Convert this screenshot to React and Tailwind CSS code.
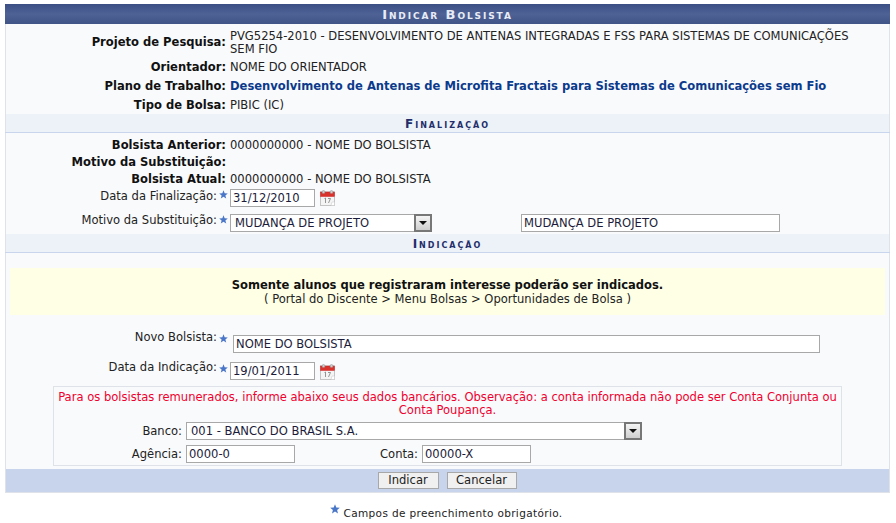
import React from "react";

const Star = ({ className = "" }) => (
  <svg width="9" height="9" viewBox="0 0 10 10" className={className}>
    <path d="M5 0.3 L6.3 3.6 L9.8 3.8 L7.1 6 L8 9.5 L5 7.6 L2 9.5 L2.9 6 L0.2 3.8 L3.7 3.6 Z" fill="#4a76c8" />
  </svg>
);

const Calendar = () => (
  <svg width="15" height="16" viewBox="0 0 15 16" className="block">
    <rect x="0.5" y="2" width="14" height="13.5" fill="#f4f4f4" stroke="#c4c4c4" />
    <rect x="0.5" y="2" width="14" height="4.5" fill="#d9312b" stroke="#c22" strokeWidth="0.5" />
    <circle cx="3.5" cy="2" r="1.5" fill="#cccccc" stroke="#888" strokeWidth="0.5" />
    <circle cx="11.5" cy="2" r="1.5" fill="#cccccc" stroke="#888" strokeWidth="0.5" />
    <path d="M4.5 8.5 L5.5 8 V13 M8 8.5 H10.5 L8.5 13" fill="none" stroke="#8a8a8a" strokeWidth="0.9" />
    <path d="M12 12 H14.5 V15.5 H11 Z" fill="#ffffff" stroke="#c4c4c4" strokeWidth="0.5" />
  </svg>
);

const Arrow = ({ className = "" }) => (
  <span className={`absolute flex w-[18px] items-center justify-center border-2 border-[#777] bg-[linear-gradient(#f4f4f4,#cfcfcf)] ${className}`}>
    <svg width="8" height="4" viewBox="0 0 8 4"><path d="M0 0 H8 L4 4 Z" fill="#111" /></svg>
  </span>
);

const ctl = "h-[18px] border border-[#a8a8a8] bg-white px-[2px] text-[11.55px] leading-[16px] text-[#1c1c3a] outline-none font-['DejaVu_Sans',sans-serif]";

const Info = ({ label, children, className = "", top = "" }) => (
  <div className={`flex gap-[4px] ${className}`}>
    <div className={`w-[221px] shrink-0 text-right font-bold text-[#111] ${top}`}>{label}</div>
    <div className="flex-1 pr-[20px] text-[#222]">{children}</div>
  </div>
);

const Section = ({ children }) => (
  <div className="h-[19px] border-b border-[#c8d5ec] bg-[#edf1f8] text-center text-[12px] leading-[20px] font-bold tracking-[2px] text-[#222e6a] [font-variant:small-caps] shadow-[inset_1px_0_#dfe2e8,inset_-1px_0_#dfe2e8]">
    {children}
  </div>
);

const Label = ({ children, className = "" }) => (
  <div className={`w-[212px] shrink-0 text-right text-[#222] ${className}`}>{children}</div>
);

export default function App() {
  return (
    <div className="h-[523px] w-[896px] overflow-hidden bg-white pt-[4px] font-['DejaVu_Sans',sans-serif] text-[11.55px] leading-[13px]">
      <div className="mx-[5px] w-[885px] bg-[#f9fafc] shadow-[inset_1px_0_#dfe2e8,inset_-1px_0_#dfe2e8]">
        <div className="h-[20px] bg-[linear-gradient(#3c4f85,#4f6296_50%,#415488)] text-center text-[13px] leading-[22px] font-bold tracking-[1.9px] text-[#e8ecf6] [font-variant:small-caps]">
          Indicar Bolsista
        </div>

        <div className="pt-[6px]">
          <Info label="Projeto de Pesquisa:" className="h-[28px]" top="pt-[6px]">
            PVG5254-2010 - DESENVOLVIMENTO DE ANTENAS INTEGRADAS E FSS PARA SISTEMAS DE COMUNICAÇÕES SEM FIO
          </Info>
          <Info label="Orientador:" className="h-[19px] pt-[3px]">NOME DO ORIENTADOR</Info>
          <Info label="Plano de Trabalho:" className="h-[19px] pt-[3px]">
            <span className="font-bold text-[#0c3a8c]">Desenvolvimento de Antenas de Microfita Fractais para Sistemas de Comunicações sem Fio</span>
          </Info>
          <Info label="Tipo de Bolsa:" className="h-[18px] pt-[3px]">PIBIC (IC)</Info>
        </div>

        <Section>Finalização</Section>

        <div className="h-[101px] pt-[6px]">
          <Info label="Bolsista Anterior:" className="h-[17px]">0000000000 - NOME DO BOLSISTA</Info>
          <Info label="Motivo da Substituição:" className="h-[17px]"><span /></Info>
          <Info label="Bolsista Atual:" className="h-[15px]">0000000000 - NOME DO BOLSISTA</Info>
          <div className="flex h-[25px] items-start">
            <Label className="pt-[2px]">Data da Finalização:</Label>
            <Star className="mt-[2px] ml-[2px]" />
            <input readOnly value="31/12/2010" className={`${ctl} mt-[1px] ml-[2px] w-[85px]`} />
            <div className="mt-[2px] ml-[5px]"><Calendar /></div>
          </div>
          <div className="flex items-start">
            <Label className="pt-[1px]">Motivo da Substituição:</Label>
            <Star className="mt-[2px] ml-[2px]" />
            <div className="relative mt-[1px] ml-[2px]">
              <select defaultValue="a" className={`${ctl} w-[202px] appearance-none pl-[4px]`}>
                <option value="a">MUDANÇA DE PROJETO</option>
              </select>
              <Arrow className="top-0 right-0 h-[18px]" />
            </div>
            <input readOnly value="MUDANÇA DE PROJETO" className={`${ctl} mt-[1px] ml-[89px] w-[259px]`} />
          </div>
        </div>

        <Section>Indicação</Section>

        <div className="mt-[15px] mr-[5px] ml-[5px] h-[47px] bg-[#ffffe5] pt-[11px] text-center text-[#222]">
          <div className="font-bold text-[#111]">Somente alunos que registraram interesse poderão ser indicados.</div>
          <div className="mt-[1px]">( Portal do Discente &gt; Menu Bolsas &gt; Oportunidades de Bolsa )</div>
        </div>

        <div className="mt-[16px] flex h-[30px] items-start">
          <Label>Novo Bolsista:</Label>
          <Star className="mt-[3px] ml-[2px]" />
          <input readOnly value="NOME DO BOLSISTA" className={`${ctl} mt-[4px] ml-[5px] w-[587px]`} />
        </div>
        <div className="flex h-[25px] items-start">
          <Label>Data da Indicação:</Label>
          <Star className="mt-[3px] ml-[2px]" />
          <input readOnly value="19/01/2011" className={`${ctl} mt-[1px] ml-[2px] w-[85px]`} />
          <div className="mt-[3px] ml-[5px]"><Calendar /></div>
        </div>

        <div className="mx-[48px] h-[80px] w-[789px] border border-[#dfe2e8] pt-[4px]">
          <p className="mx-auto w-[785px] text-center text-[#f0002e]">
            Para os bolsistas remunerados, informe abaixo seus dados bancários. Observação: a conta informada não pode ser Conta Conjunta ou Conta Poupança.
          </p>
          <div className="mt-[5px] flex h-[23px] items-start">
            <div className="w-[128px] pt-[3px] text-right text-[#222]">Banco:</div>
            <div className="relative ml-[4px]">
              <select defaultValue="a" className={`${ctl} w-[456px] appearance-none pl-[4px]`}>
                <option value="a">001 - BANCO DO BRASIL S.A.</option>
              </select>
              <Arrow className="top-0 right-0 h-[18px]" />
            </div>
          </div>
          <div className="flex items-start">
            <div className="w-[128px] pt-[3px] text-right text-[#222]">Agência:</div>
            <input readOnly value="0000-0" className={`${ctl} ml-[4px] w-[109px]`} />
            <div className="w-[123px] pt-[3px] text-right text-[#222]">Conta:</div>
            <input readOnly value="00000-X" className={`${ctl} ml-[4px] w-[109px]`} />
          </div>
        </div>

        <div className="mt-[3px] flex h-[24px] items-start justify-center gap-[8px] bg-[#c8d4eb] pt-[3px] pr-[1px] shadow-[inset_1px_0_#dfe2e8,inset_-1px_0_#dfe2e8,inset_0_-1px_#dfe2e8]">
          <button className="h-[17px] w-[61px] border border-[#a8a8a8] bg-[#f0f0f0] text-[11.55px] leading-[15px] text-[#222]">Indicar</button>
          <button className="h-[17px] w-[70px] border border-[#a8a8a8] bg-[#f0f0f0] text-[11.55px] leading-[15px] text-[#222]">Cancelar</button>
        </div>
      </div>

      <div className="mt-[11px] flex items-start justify-center pr-[4px] text-[10.5px] leading-[13px] tracking-[0.36px] text-[#222]">
        <Star className="mr-[4px] h-[10px] w-[10px]" />
        <span className="mt-[3px]">Campos de preenchimento obrigatório.</span>
      </div>
    </div>
  );
}
